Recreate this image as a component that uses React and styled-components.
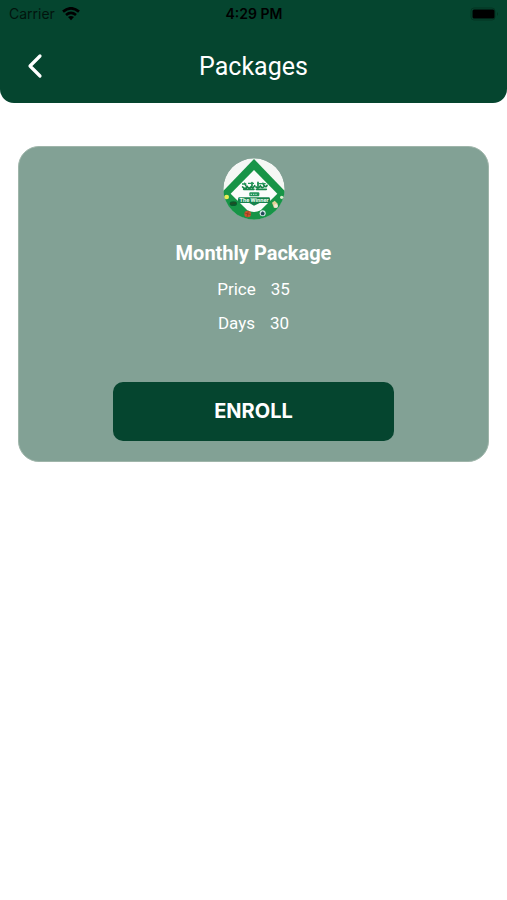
import React from "react";
import styled, { createGlobalStyle } from "styled-components";

const GlobalStyle = createGlobalStyle`
  * { box-sizing: border-box; }
  body { margin: 0; background: #fff; }
  h1, h2, dl, dt, dd { margin: 0; font: inherit; }
`;

const Page = styled.div`
  font-family: Roboto, "Noto Sans", sans-serif;
  color: #fff;
`;

const Header = styled.header`
  background: #05452f;
  border-radius: 0 0 14px 14px;
  padding-bottom: 8px;
`;

const StatusBar = styled.div`
  display: grid;
  grid-template-columns: 1fr auto 1fr;
  align-items: center;
  height: 28px;
  padding: 0 8px 0 9px;
  color: #02140d;
  font: 400 14px/20px Inter, sans-serif;
`;

const Carrier = styled.div`
  display: flex;
  align-items: center;
  gap: 7px;
`;

const Clock = styled.time`
  color: #000;
  font-weight: 600;
`;

const BatteryIcon = styled.svg`
  justify-self: end;
`;

const NavBar = styled.div`
  display: grid;
  grid-template-columns: 70px 1fr 70px;
  align-items: center;
  height: 67px;
  padding-top: 8px;
`;

const BackButton = styled.button`
  display: flex;
  justify-content: center;
  padding: 8px 0;
  border: 0;
  background: none;
  color: inherit;
  cursor: pointer;
`;

const Title = styled.h1`
  && { font-size: 25px; line-height: 32px; }
  padding-top: 2px;
  text-align: center;
`;

const Content = styled.main`
  padding: 43px 18px;
`;

const Card = styled.section`
  display: flex;
  flex-direction: column;
  align-items: center;
  padding: 11px 0 20px;
  border: 1px solid #9fb5aa;
  border-radius: 21px;
  background: #82a195;
`;

const PackageName = styled.h2`
  && { font-size: 20px; line-height: 28px; font-weight: 700; }
  margin-top: 19px;
`;

const Details = styled.dl`
  display: grid;
  gap: 10px;
  margin-top: 10px;
  font-size: 17px;
  line-height: 24px;
`;

const Detail = styled.div`
  display: flex;
  justify-content: center;
  gap: 15px;
`;

const EnrollButton = styled.button`
  width: 60%;
  min-width: 200px;
  margin-top: 47px;
  padding: 17px;
  border: 0;
  border-radius: 10px;
  background: #05452f;
  color: #fff;
  font: 700 20px/25px Inter, sans-serif;
  cursor: pointer;
`;

function Wifi() {
  return (
    <svg width="18" height="14" viewBox="0 0 18 14" fill="none" stroke="#000" strokeWidth="2.7" aria-hidden="true">
      <path d="M1 4.6Q9-2 17 4.6M4 8Q9 3.9 14 8" />
      <path d="M6 10Q9 7.8 12 10L9 13.2Z" fill="#000" stroke="none" />
    </svg>
  );
}

function Battery() {
  return (
    <BatteryIcon width="29" height="14" viewBox="0 0 29 14" aria-label="Battery full">
      <rect x="1" y="1" width="24" height="12" rx="3" fill="none" stroke="#043522" />
      <rect x="2.5" y="2.5" width="22" height="9" rx="1.5" fill="#000" />
      <path d="M27 5v4q2-2 0-4" fill="#043522" />
    </BatteryIcon>
  );
}

function Logo() {
  return (
    <svg width="62" height="62" viewBox="23 19 186 186" role="img" aria-label="The Winner">
      <defs>
        <clipPath id="badge"><circle cx="116" cy="112" r="92" /></clipPath>
      </defs>
      <g clipPath="url(#badge)">
        <circle cx="116" cy="112" r="92" fill="#f5f7f5" />
        <path d="M116 22L226 136L116 240L6 136Z" fill="#179447" />
        <path d="M116 55L186 126L136 176Q116 186 96 176L46 126Z" fill="#fbfcfb" />
      </g>
      <g fill="none" stroke="#168548" strokeWidth="5" strokeLinecap="round">
        <path d="M82 106q7 9 14-1q5 8 12 0q5 7 10-3M122 106q8 5 13-3q6 9 13 0q4 5 7-2M88 95l4 8M110 93v10M128 92v11M143 95l3 7M85 113h31M123 113h30" />
      </g>
      <path d="M80 97h13M98 95h18M125 96h26" stroke="#24975b" strokeWidth="4" />
      <rect x="102" y="122" width="30" height="12" rx="3" fill="#21935a" />
      <path d="M106 128h21" stroke="#c6ead5" strokeWidth="3" strokeDasharray="4 3" />
      <path d="M70 137h92q5 8 0 17h-29l-17 8-14-8H70q-5-8 0-17Z" fill="#16834c" />
      <text x="116" y="151" textAnchor="middle" fill="#effff4" fontSize="17" fontWeight="700" fontFamily="Roboto, sans-serif">The Winner</text>
      <circle cx="34" cy="136" r="7" fill="#e9ee54" />
      <ellipse cx="54" cy="156" rx="11" ry="7" fill="#075c2d" />
      <path d="M45 157l17-4" stroke="#204d25" strokeWidth="5" />
      <circle cx="97" cy="187" r="10" fill="#c9542c" />
      <path d="M88 184l18 5M99 178l-4 18" stroke="#752f20" strokeWidth="1.5" />
      <circle cx="142" cy="185" r="9" fill="#dce9ec" />
      <path d="M142 179l6 5-2 7h-8l-2-7Z" fill="#244958" />
      <path d="M170 153l8-6 9 9-2 10-9 3Z" fill="#e6cf99" />
      <circle cx="182" cy="163" r="6" fill="#f1e8d6" />
      <circle cx="199" cy="137" r="5" fill="#d9edce" />
    </svg>
  );
}

const details = [
  { label: "Price", value: 35 },
  { label: "Days", value: 30 },
];

export default function App() {
  return (
    <Page>
      <GlobalStyle />
      <Header>
        <StatusBar>
          <Carrier>Carrier <Wifi /></Carrier>
          <Clock>4:29 PM</Clock>
          <Battery />
        </StatusBar>
        <NavBar>
          <BackButton aria-label="Back">
            <svg width="16" height="26" viewBox="0 0 16 26" fill="none" stroke="currentColor" strokeWidth="3.2" strokeLinecap="round" strokeLinejoin="round">
              <path d="M13 3L3 13L13 23" />
            </svg>
          </BackButton>
          <Title>Packages</Title>
        </NavBar>
      </Header>
      <Content>
        <Card>
          <Logo />
          <PackageName>Monthly Package</PackageName>
          <Details>
            {details.map(({ label, value }) => (
              <Detail key={label}>
                <dt>{label}</dt>
                <dd>{value}</dd>
              </Detail>
            ))}
          </Details>
          <EnrollButton type="button">ENROLL</EnrollButton>
        </Card>
      </Content>
    </Page>
  );
}
